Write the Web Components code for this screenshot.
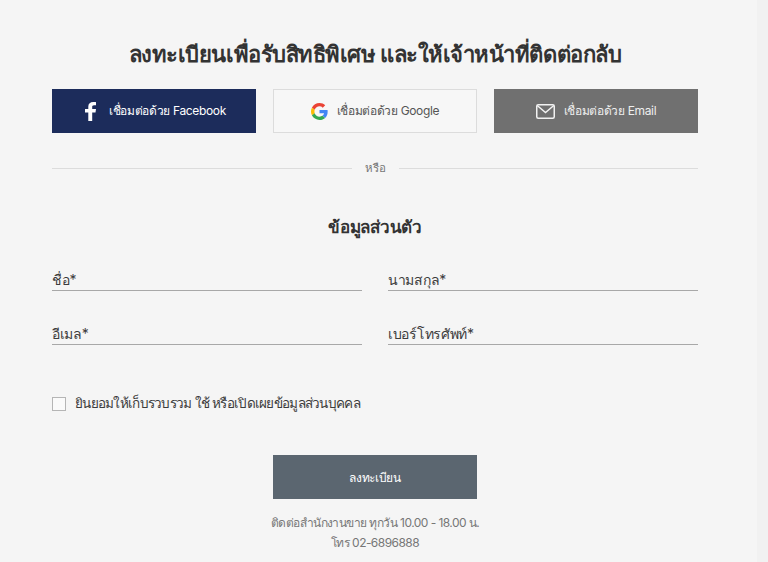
<!DOCTYPE html>
<html lang="th">
<head>
<meta charset="utf-8">
<title>ลงทะเบียน</title>
<style>
    html, body { margin: 0; height: 100%; overflow: hidden; background: #f5f5f5; }
    body { font-family: Inter, "Noto Sans", "Liberation Sans", sans-serif; color: #333; }
</style>
</head>
<body>
<register-page>
    <social-button slot="social" type="facebook" label="เชื่อมต่อด้วย Facebook"></social-button>
    <social-button slot="social" type="google" label="เชื่อมต่อด้วย Google"></social-button>
    <social-button slot="social" type="email" label="เชื่อมต่อด้วย Email"></social-button>
    <form-field slot="fields" label="ชื่อ*"></form-field>
    <form-field slot="fields" label="นามสกุล*"></form-field>
    <form-field slot="fields" label="อีเมล*"></form-field>
    <form-field slot="fields" label="เบอร์โทรศัพท์*"></form-field>
</register-page>

<script>
const pageTemplate = document.createElement('template');
pageTemplate.innerHTML = `
    <style>
        :host {
            display: flex;
            height: 562px;
            background: #f5f5f5;
        }
        .main {
            width: 757px;
            box-sizing: border-box;
            padding: 0 59px 0 52px;
            overflow: hidden;
        }
        .strip {
            flex: 1;
            background: #f1f1f1;
        }
        h1 {
            margin: 0;
            padding-top: 37px;
            height: 52px;
            line-height: 34px;
            font-size: 22px;
            font-weight: 700;
            letter-spacing: -0.47px;
            text-align: center;
            color: #333;
            white-space: nowrap;
        }
        .social {
            display: grid;
            grid-template-columns: repeat(3, 204px);
            column-gap: 17px;
        }
        .divider {
            display: flex;
            align-items: center;
            gap: 13px;
            margin-top: 24px;
            height: 22px;
            font-size: 11.5px;
            color: #777;
        }
        .divider::before, .divider::after {
            content: '';
            flex: 1;
            height: 1px;
            background: #dcdcdc;
        }
        h2 {
            margin: 33px 0 0;
            height: 30px;
            line-height: 30px;
            font-size: 17px;
            font-weight: 600;
            letter-spacing: -0.3px;
            text-align: center;
            color: #333;
        }
        .fields {
            display: grid;
            grid-template-columns: 310px 310px;
            justify-content: space-between;
            row-gap: 24px;
            margin-top: 19px;
        }
        .consent {
            display: flex;
            align-items: center;
            gap: 9px;
            margin-top: 47px;
            height: 22px;
            font-size: 13.5px;
            letter-spacing: -0.72px;
            color: #3c3c3c;
        }
        .box {
            width: 12px;
            height: 12px;
            margin-top: 1px;
            border: 1px solid #b5b5b5;
            background: #fafafa;
        }
        .submit {
            display: flex;
            align-items: center;
            justify-content: center;
            width: 204px;
            height: 44px;
            margin: 41px auto 0;
            background: #5b6670;
            color: #fff;
            font-size: 12px;
            letter-spacing: -0.3px;
        }
        .contact {
            margin: 14px 0 0;
            line-height: 20px;
            font-size: 12px;
            letter-spacing: -0.55px;
            text-align: center;
            color: #777;
        }
    </style>
    <div class="main">
        <h1>ลงทะเบียนเพื่อรับสิทธิพิเศษ และให้เจ้าหน้าที่ติดต่อกลับ</h1>
        <div class="social"><slot name="social"></slot></div>
        <div class="divider">หรือ</div>
        <h2>ข้อมูลส่วนตัว</h2>
        <div class="fields"><slot name="fields"></slot></div>
        <div class="consent"><span class="box"></span><span>ยินยอมให้เก็บรวบรวม ใช้ หรือเปิดเผยข้อมูลส่วนบุคคล</span></div>
        <div class="submit">ลงทะเบียน</div>
        <p class="contact">ติดต่อสำนักงานขาย ทุกวัน 10.00 - 18.00 น.<br>โทร 02-6896888</p>
    </div>
    <div class="strip"></div>
`;
class RegisterPage extends HTMLElement {
    constructor() {
        super();
        this.attachShadow({mode: 'open'}).appendChild(pageTemplate.content.cloneNode(true));
    }
}
window.customElements.define('register-page', RegisterPage);

const socialIcons = {
    facebook: `<svg width="11" height="19" viewBox="1.2 .4 11 21.600" preserveAspectRatio="none"><path fill="#fff" d="M8.400 22V12.200h3.300l.5-3.900H8.400V5.900c0-1.100.3-1.900 1.900-1.900h2V.6C12 .5 10.800.4 9.400.4 6.500.4 4.500 2.200 4.500 5.400v2.900H1.200v3.900h3.300V22z"/></svg>`,
    google: `<svg width="17" height="17" viewBox="0 0 48 48"><path fill="#EA4335" d="M24 9.500c3.500 0 6.700 1.200 9.200 3.600l6.900-6.900C35.900 2.400 30.500 0 24 0 14.600 0 6.500 5.400 2.600 13.200l8 6.200C12.500 13.700 17.800 9.500 24 9.500z"/><path fill="#4285F4" d="M47 24.500c0-1.600-.1-3.100-.4-4.500H24v9h12.900c-.6 3-2.200 5.500-4.700 7.200l7.700 6C44.400 38.100 47 31.900 47 24.500z"/><path fill="#FBBC05" d="M10.500 28.600c-.5-1.400-.8-3-.8-4.600s.3-3.200.8-4.600l-8-6.200C.9 16.500 0 20.100 0 24s.9 7.500 2.600 10.800z"/><path fill="#34A853" d="M24 48c6.500 0 11.900-2.100 15.900-5.800l-7.700-6c-2.200 1.400-4.900 2.300-8.200 2.300-6.200 0-11.500-4.200-13.400-9.900l-8 6.200C6.500 42.600 14.600 48 24 48z"/></svg>`,
    email: `<svg width="19" height="15" viewBox="0 0 19 15"><rect x=".75" y=".75" width="17.500" height="13.500" rx="1.500" fill="none" stroke="#f2f2f2" stroke-width="1.500"/><path d="M1.200 1.500 9.500 8.500l8.300-7" fill="none" stroke="#f2f2f2" stroke-width="1.500"/></svg>`
};
const buttonTemplate = document.createElement('template');
buttonTemplate.innerHTML = `
    <style>
        :host {
            display: flex;
            align-items: center;
            justify-content: center;
            height: 44px;
            box-sizing: border-box;
            font-size: 12px;
            letter-spacing: -0.35px;
            white-space: nowrap;
        }
        :host([type='facebook']) { background: #1c2c5b; color: #fff; gap: 13px; padding-left: 3px; }
        :host([type='google']) { background: #f7f7f7; border: 1px solid #dcdcdc; color: #555; gap: 9px; }
        :host([type='email']) { background: #707070; color: #eee; gap: 9px; }
        .icon { display: flex; }
        .label { margin-top: -1px; }
    </style>
    <span class="icon"></span><span class="label"></span>
`;
class SocialButton extends HTMLElement {
    constructor() {
        super();
        this._shadowRoot = this.attachShadow({mode: 'open'});
        this._shadowRoot.appendChild(buttonTemplate.content.cloneNode(true));
    }
    connectedCallback() {
        this._shadowRoot.querySelector('.icon').innerHTML = socialIcons[this.getAttribute('type')];
        this._shadowRoot.querySelector('.label').textContent = this.getAttribute('label');
    }
}
window.customElements.define('social-button', SocialButton);

const fieldTemplate = document.createElement('template');
fieldTemplate.innerHTML = `
    <style>
        :host {
            display: block;
            height: 30px;
            padding-top: 8px;
            line-height: 21px;
            box-sizing: border-box;
            border-bottom: 1px solid #a8a8a8;
            font-size: 14px;
            letter-spacing: -0.3px;
            color: #3c3c3c;
        }
    </style>
    <span class="label"></span>
`;
class FormField extends HTMLElement {
    constructor() {
        super();
        this._shadowRoot = this.attachShadow({mode: 'open'});
        this._shadowRoot.appendChild(fieldTemplate.content.cloneNode(true));
    }
    connectedCallback() {
        this._shadowRoot.querySelector('.label').textContent = this.getAttribute('label');
    }
}
window.customElements.define('form-field', FormField);
</script>
</body>
</html>
